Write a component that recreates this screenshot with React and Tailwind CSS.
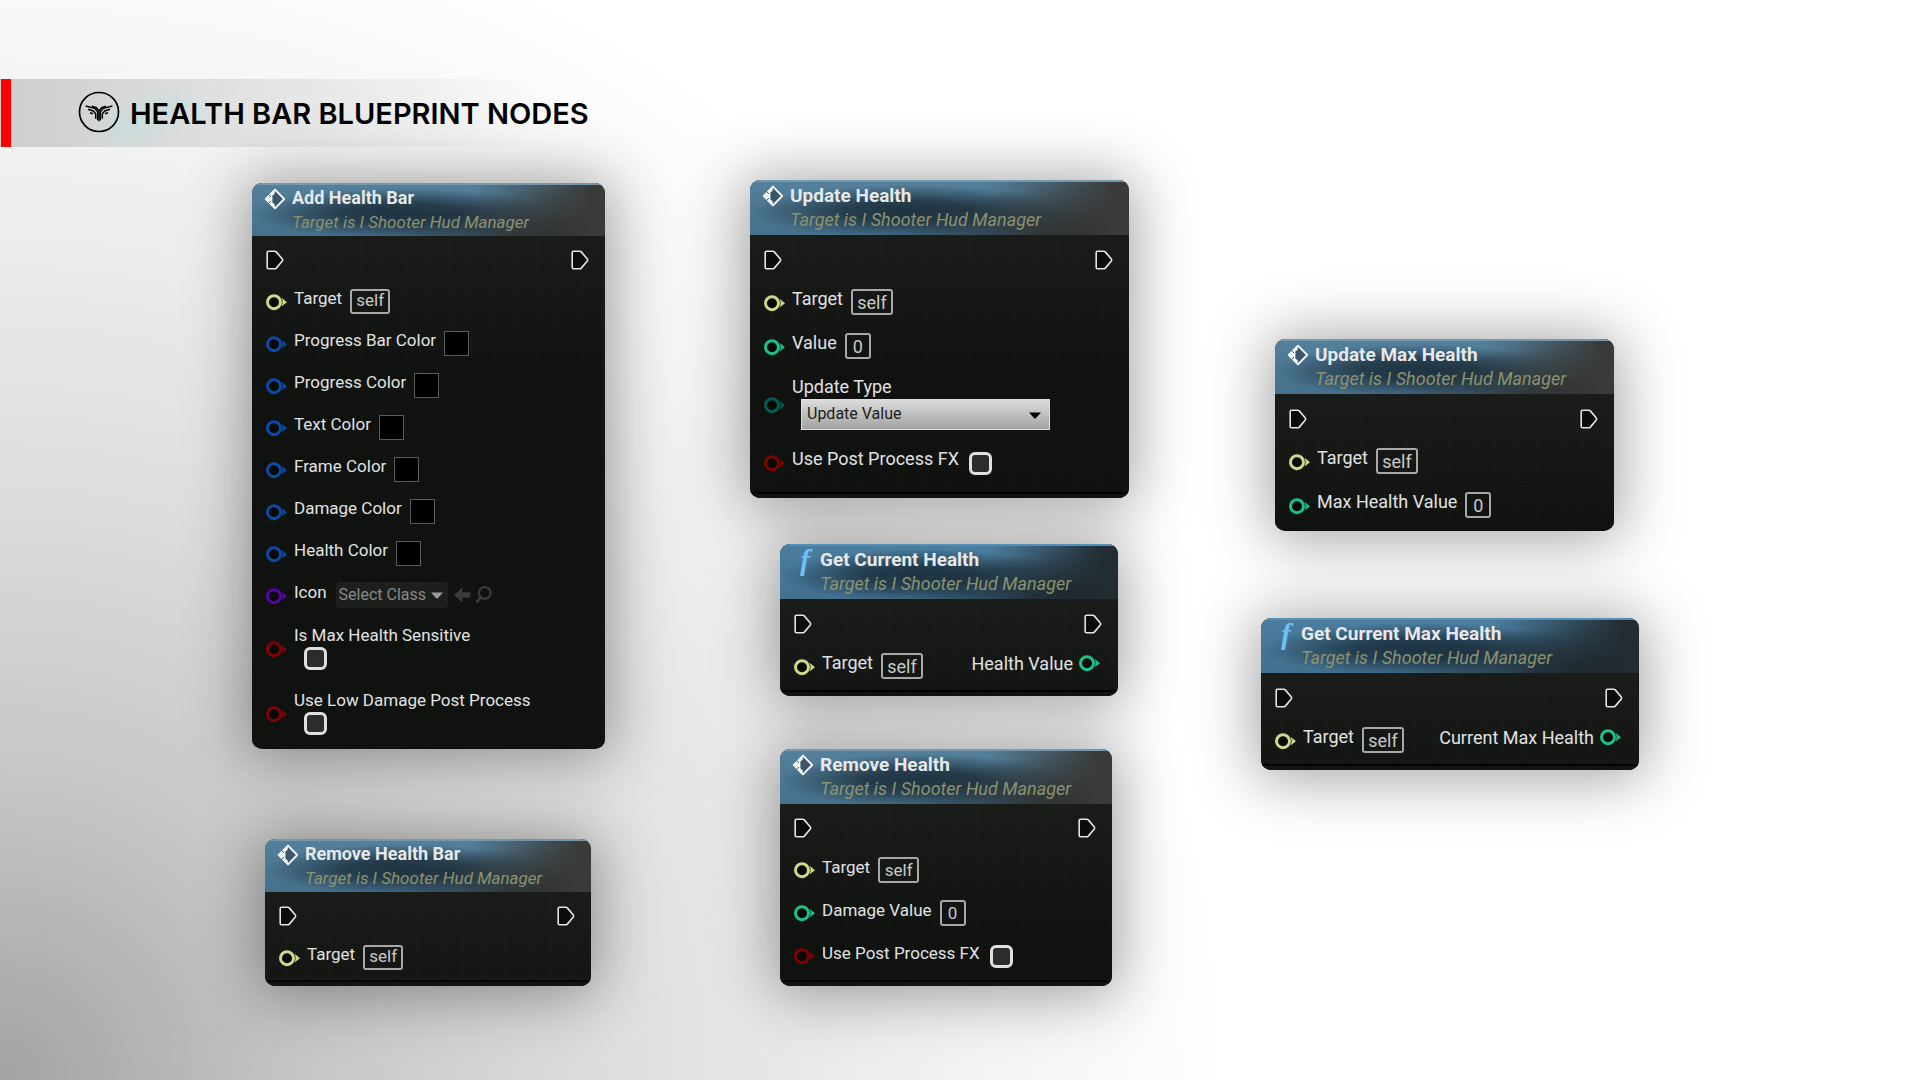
import React from "react";
import clsx from "clsx";

const PINS = {
  object: "#cfd888",
  color: "#0a4aa8",
  class: "#5306a6",
  bool: "#7f0303",
  float: "#1cc08c",
  enum: "#035c52",
};

const NODES = [
  {
    id: "add-health-bar",
    title: "Add Health Bar",
    place: "left-[252px] top-[183px] w-[353px] pb-0.5",
    size: "sm",
    inputs: [
      { label: "Target", pin: "object", type: "value", value: "self" },
      { label: "Progress Bar Color", pin: "color", type: "color" },
      { label: "Progress Color", pin: "color", type: "color" },
      { label: "Text Color", pin: "color", type: "color" },
      { label: "Frame Color", pin: "color", type: "color" },
      { label: "Damage Color", pin: "color", type: "color" },
      { label: "Health Color", pin: "color", type: "color" },
      { label: "Icon", pin: "class", type: "class" },
      { label: "Is Max Health Sensitive", pin: "bool", type: "stackedBool" },
      { label: "Use Low Damage Post Process", pin: "bool", type: "stackedBool" },
    ],
  },
  {
    id: "remove-health-bar",
    title: "Remove Health Bar",
    place: "left-[265px] top-[839px] w-[326px]",
    size: "sm",
    lip: "mt-px",
    inputs: [{ label: "Target", pin: "object", type: "value", value: "self" }],
  },
  {
    id: "update-health",
    title: "Update Health",
    place: "left-[750px] top-[180px] w-[379px]",
    size: "lg",
    lip: "mt-[7px]",
    inputs: [
      { label: "Target", pin: "object", type: "value", value: "self" },
      { label: "Value", pin: "float", type: "value", value: "0" },
      { label: "Update Type", pin: "enum", type: "enum" },
      { label: "Use Post Process FX", pin: "bool", type: "bool" },
    ],
  },
  {
    id: "get-current-health",
    title: "Get Current Health",
    place: "left-[780px] top-[544px] w-[338px]",
    size: "lg",
    lip: "mt-px",
    pure: true,
    inputs: [{ label: "Target", pin: "object", type: "value", value: "self" }],
    output: { label: "Health Value", pin: "float" },
  },
  {
    id: "remove-health",
    title: "Remove Health",
    place: "left-[780px] top-[749px] w-[332px]",
    size: "md",
    lip: "mt-0.5",
    inputs: [
      { label: "Target", pin: "object", type: "value", value: "self" },
      { label: "Damage Value", pin: "float", type: "value", value: "0" },
      { label: "Use Post Process FX", pin: "bool", type: "bool" },
    ],
  },
  {
    id: "update-max-health",
    title: "Update Max Health",
    place: "left-[1275px] top-[339px] w-[339px] pb-[3px]",
    size: "lg",
    inputs: [
      { label: "Target", pin: "object", type: "value", value: "self" },
      { label: "Max Health Value", pin: "float", type: "value", value: "0" },
    ],
  },
  {
    id: "get-current-max-health",
    title: "Get Current Max Health",
    place: "left-[1261px] top-[618px] w-[378px]",
    size: "lg",
    lip: "mt-px",
    pure: true,
    inputs: [{ label: "Target", pin: "object", type: "value", value: "self" }],
    output: { label: "Current Max Health", pin: "float" },
  },
];

const SIZES = {
  sm: {
    header: "h-[53px]",
    title: "text-[18px] leading-[26px]",
    sub: "text-[17px]",
    exec: "h-[45px]",
    row: "h-[42px]",
    stack: "h-[65px]",
    text: "text-[17px]",
    box: "h-[25px]",
    self: "w-10",
  },
  md: {
    header: "h-[55px]",
    title: "text-[19px] leading-[27px]",
    sub: "text-[18px]",
    exec: "h-[45px]",
    row: "h-[43px]",
    stack: "h-[72px]",
    text: "text-[17px]",
    box: "h-[26px]",
    self: "w-[41px]",
  },
  lg: {
    header: "h-[55px]",
    title: "text-[19px] leading-[27px]",
    sub: "text-[18px]",
    exec: "h-[46px]",
    row: "h-11",
    stack: "h-[72px]",
    text: "text-[18px]",
    box: "h-[26px]",
    self: "w-[42px]",
  },
};

const ExecPin = () => (
  <svg width="18" height="20" viewBox="0 0 18 20" fill="none" aria-hidden="true">
    <path
      d="M2.5 1.2H8.6Q9.6 1.2 10.3 1.9L16.3 9Q17 10 16.3 11L10.3 18.1Q9.6 18.8 8.6 18.8H2.5Q1.2 18.8 1.2 17.5V2.5Q1.2 1.2 2.5 1.2Z"
      fill="#0b0d0b"
      stroke="#e4e4e4"
      strokeWidth="1.6"
    />
  </svg>
);

const Pin = ({ kind }) => (
  <svg width="22" height="17" viewBox="0 0 22 17" className="shrink-0" aria-hidden="true">
    <circle cx="8" cy="8.2" r="6.5" fill="#080a08" stroke={PINS[kind]} strokeWidth="3" />
    <path d="M15.6 3.8L21 8.2L15.6 12.6Q17.6 8.2 15.6 3.8Z" fill={PINS[kind]} />
  </svg>
);

const EventIcon = () => (
  <svg width="22" height="22" viewBox="0 0 22 22" aria-hidden="true">
    <path d="M11 1.6L20.2 11L11 20.4L1.8 11Z" fill="#3a566a" stroke="#f2f4f5" strokeWidth="1.9" strokeLinejoin="round" />
    <path d="M11 1.6L1.4 11L11 20.4L10.6 16.2L8.4 14.6V7.4L10.6 5.8Z" fill="#f2f4f5" />
    <path d="M4.4 6.4L7 9M4.4 15.6L7 13" stroke="#3a566a" strokeWidth="1" />
  </svg>
);

const Caret = ({ className }) => (
  <svg width="12" height="7" viewBox="0 0 12 7" className={className} aria-hidden="true">
    <path d="M0 0.4H12L7 6Q6 7 5 6Z" fill="currentColor" />
  </svg>
);

const Tick = ({ id }) => (
  <input
    id={id}
    type="checkbox"
    className="size-[23px] shrink-0 appearance-none rounded-[6px] border-[3px] border-[#e0e0e0] bg-[#2b2c2b] checked:bg-[#8a8a8a]"
  />
);

const Field = ({ id, input, size }) => {
  if (input.type === "value") {
    return (
      <input
        id={id}
        type="text"
        defaultValue={input.value}
        className={clsx(
          "rounded-[3px] border-2 border-[#a8a8a8] bg-transparent p-0 text-center text-[#c9c9c9] outline-none",
          size.text,
          size.box,
          input.value === "self" ? size.self : "w-[26px]"
        )}
      />
    );
  }
  if (input.type === "color") {
    return <button id={id} type="button" className="size-[25px] border border-[#5b5b5b] bg-black" />;
  }
  if (input.type === "class") {
    return (
      <div className="flex items-center pl-px">
        <div className="relative">
          <select
            id={id}
            className="h-[26px] w-28 appearance-none rounded-[4px] bg-[#1d1f1d] pl-[3px] text-[16px] text-[#8a8a8a] outline-none"
          >
            <option>Select Class</option>
          </select>
          <Caret className="pointer-events-none absolute top-[10px] right-[5px] text-[#9a9a9a]" />
        </div>
        <button type="button" aria-label="Use selected asset" className="ml-1.5">
          <svg width="17" height="16" viewBox="0 0 17 16" aria-hidden="true">
            <path d="M0 8L8.4 0.6V5.2H16.4V10.8H8.4V15.4Z" fill="#393b39" />
          </svg>
        </button>
        <button type="button" aria-label="Browse" className="ml-1">
          <svg width="17" height="18" viewBox="0 0 17 18" fill="none" stroke="#393b39" aria-hidden="true">
            <circle cx="9.8" cy="7" r="5.8" strokeWidth="2.2" />
            <path d="M5.6 11.6L1.4 16.4" strokeWidth="3" />
          </svg>
        </button>
      </div>
    );
  }
  if (input.type === "enum") {
    return (
      <div className="relative ml-[9px]">
        <select
          id={id}
          className="h-[31px] w-[249px] appearance-none border border-[#dedede] bg-linear-to-b from-[#dcdcdc] to-[#a3a3a3] pl-[5px] text-[16px] text-[#1c1c1c] outline-none"
        >
          <option>Update Value</option>
          <option>Update Max Value</option>
        </select>
        <Caret className="pointer-events-none absolute top-[13px] right-[9px] text-black" />
      </div>
    );
  }
  return <Tick id={id} />;
};

const InputRow = ({ id, input, size }) => {
  const stacked = input.type === "stackedBool" || input.type === "enum";
  if (stacked) {
    return (
      <div className={clsx("flex items-center pl-3.5", size.stack)}>
        <Pin kind={input.pin} />
        <div className="flex flex-col items-start pb-1.5 pl-1.5">
          <label htmlFor={id} className={clsx("leading-6", size.text)}>
            {input.label}
          </label>
          <div className={clsx(input.type === "stackedBool" && "h-6 pl-2.5")}>
            <Field id={id} input={input} size={size} />
          </div>
        </div>
      </div>
    );
  }
  return (
    <div className={clsx("flex items-center pl-3.5", size.row)}>
      <Pin kind={input.pin} />
      <label htmlFor={id} className={clsx("pr-2 pb-2 pl-1.5 leading-6", size.text)}>
        {input.label}
      </label>
      <div className={clsx("flex", input.type === "bool" ? "pl-0.5" : "pb-0.5")}>
        <Field id={id} input={input} size={size} />
      </div>
    </div>
  );
};

const BlueprintNode = ({ node }) => {
  const size = SIZES[node.size];
  return (
    <section
      aria-label={node.title}
      className={clsx(
        "absolute overflow-hidden rounded-[10px] bg-[#0f120f] text-[#e2e2e2] shadow-[0_3px_60px_6px_rgba(0,0,0,0.36)]",
        node.place
      )}
    >
      <header
        className={clsx(
          "flex border-t-2 pl-3",
          size.header,
          node.pure
            ? "border-[#5290b8] bg-[linear-gradient(to_right,transparent_62%,#222c32_96%),radial-gradient(ellipse_62%_95%_at_100%_100%,#182025_20%,transparent_100%),radial-gradient(ellipse_42%_50%_at_42%_56%,#1d3342_0%,rgba(29,51,66,0.85)_40%,transparent_100%),linear-gradient(#4b7d9f,#42708f)]"
            : "border-[#7499ae] bg-[linear-gradient(to_right,transparent_62%,#3a3b39_96%),radial-gradient(ellipse_62%_95%_at_100%_100%,#222424_20%,transparent_100%),radial-gradient(ellipse_42%_50%_at_42%_56%,#1f3340_0%,rgba(31,51,64,0.85)_40%,transparent_100%),linear-gradient(#54809b,#466f8b)]"
        )}
      >
        <div className="flex h-[27px] w-7 items-center">
          {node.pure ? (
            <span aria-hidden="true" className="pl-2 font-['Liberation_Serif',serif] text-[30px] leading-7 font-bold text-[#6fc0f5] italic">
              f
            </span>
          ) : (
            <EventIcon />
          )}
        </div>
        <div>
          <h2 className={clsx("font-bold text-[#e6e8ea]", size.title)}>{node.title}</h2>
          <p className={clsx("leading-[22px] text-[#8b926f] italic", size.sub)}>Target is I Shooter Hud Manager</p>
        </div>
      </header>
      <div className="bg-[repeating-linear-gradient(to_right,transparent_0_21px,rgba(255,255,255,0.014)_21px_22px),repeating-linear-gradient(transparent_0_21px,rgba(255,255,255,0.014)_21px_22px),linear-gradient(#1a1c19,#0f120f_140px)]">
        <div className={clsx("flex items-center justify-between pt-[3px] pr-4 pl-3.5", size.exec)}>
          <ExecPin />
          <ExecPin />
        </div>
        <div className="flex justify-between">
          <div>
            {node.inputs.map((input, i) => (
              <InputRow key={input.label} id={`${node.id}-${i}`} input={input} size={size} />
            ))}
          </div>
          {node.output && (
            <div className={clsx("flex items-center gap-1.5 pr-[17px] pb-[7px]", size.row)}>
              <span className={size.text}>{node.output.label}</span>
              <Pin kind={node.output.pin} />
            </div>
          )}
        </div>
        {node.lip && <div className={clsx("h-1.5 border-t-2 border-[#030403] bg-[#141314]", node.lip)} />}
      </div>
    </section>
  );
};

const Logo = () => (
  <svg width="42" height="42" viewBox="0 0 126 126" fill="none" stroke="#000" aria-hidden="true">
    <circle cx="63" cy="63" r="58.5" strokeWidth="5" />
    <g strokeWidth="4.5" strokeLinejoin="miter">
      <path d="M23 45L50 52L59 62V88" />
      <path d="M103 45L76 52L67 62V88" />
      <path d="M30 55L46 60L53 68V83" />
      <path d="M96 55L80 60L73 68V83" />
      <path d="M36 65L45 68" />
      <path d="M90 65L81 68" />
      <path d="M42 46L55 50L63 60V91" />
      <path d="M84 46L71 50L63 60" />
    </g>
  </svg>
);

export default function App() {
  return (
    <main className="relative min-h-screen overflow-hidden bg-white bg-[radial-gradient(ellipse_64%_112%_at_0%_100%,#a3a3a3_0%,#c6c6c6_25%,#dedede_50%,#f2f2f2_78%,#ffffff_100%)] pt-[79px] font-[Roboto,sans-serif]">
      <div className="flex h-[68px] items-center bg-[radial-gradient(ellipse_50px_22px_at_170px_30px,rgba(170,230,230,0.3),transparent),radial-gradient(ellipse_50px_24px_at_130px_48px,rgba(170,230,230,0.3),transparent),linear-gradient(to_right,#cdcdcd,rgba(222,222,222,0.75)_270px,transparent_540px)] pl-px">
        <div className="h-full w-2.5 bg-[#fe0000]" />
        <div className="flex items-center gap-2.5 pl-[67px]">
          <div className="pb-0.5">
            <Logo />
          </div>
          <h1 className="pt-0.5 font-[Inter,sans-serif] text-[29px] font-semibold text-black">HEALTH BAR BLUEPRINT NODES</h1>
        </div>
      </div>
      {NODES.map((node) => (
        <BlueprintNode key={node.id} node={node} />
      ))}
    </main>
  );
}
